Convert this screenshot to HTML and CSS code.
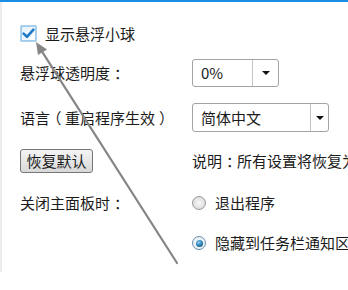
FILE: index.html
```html
<!DOCTYPE html>
<html lang="zh-CN">
<head>
<meta charset="utf-8">
<link rel="stylesheet" href="styles.css">
</head>
<body>
<div class="topbar"></div>
<div class="panel">
  <div class="row row-check">
    <label class="check">
      <svg class="checkbox" width="17" height="17" viewBox="0 0 17 17">
        <defs>
          <linearGradient id="cbg" x1="0" y1="0" x2="1" y2="1">
            <stop offset="0" stop-color="#e4f1fb"/>
            <stop offset="1" stop-color="#ffffff"/>
          </linearGradient>
        </defs>
        <rect x="0.5" y="0.5" width="16" height="16" fill="#5aa6dd"/>
        <rect x="1.5" y="1.5" width="14" height="14" fill="url(#cbg)" stroke="#9fcbec" stroke-width="1"/>
        <path d="M3.6 8.6 L7 11.8 L13.4 4.6" fill="none" stroke="#1d78c8" stroke-width="2.6" stroke-linecap="round" stroke-linejoin="round"/>
      </svg>
      <span>显示悬浮小球</span>
    </label>
  </div>

  <div class="row row-opacity">
    <div class="label">悬浮球透明度<span class="punct">：</span></div>
    <div class="select sel-small">
      <span class="sel-text">0%</span>
      <span class="sel-btn"><span class="tri"></span></span>
    </div>
  </div>

  <div class="row row-lang">
    <div class="label">语言<span class="punct">（</span>重启程序生效<span class="punct">）</span></div>
    <div class="select sel-big">
      <span class="sel-text">简体中文</span>
      <span class="sel-btn"><span class="tri"></span></span>
    </div>
  </div>

  <div class="row row-reset">
    <div class="label"><button class="btn">恢复默认</button></div>
    <div class="note">说明<span class="punct">：</span>所有设置将恢复为默认值</div>
  </div>

  <div class="row row-close">
    <div class="label">关闭主面板时<span class="punct">：</span></div>
    <div class="radio-item"><span class="radio"></span><span>退出程序</span></div>
  </div>

  <div class="row row-hide">
    <div class="label"></div>
    <div class="radio-item"><span class="radio on"><span class="dot"></span></span><span>隐藏到任务栏通知区域</span></div>
  </div>
</div>

<svg class="pointer" width="348" height="290" viewBox="0 0 348 290">
  <line x1="42.4" y1="52.1" x2="177" y2="263" stroke="#858585" stroke-width="2.2" stroke-linecap="round"/>
  <polygon points="36,42 47,49.6 38,55" fill="#858585"/>
</svg>
</body>
</html>
```
FILE: styles.css
```css
html, body {
  margin: 0;
  padding: 0;
  background: #ffffff;
  width: 348px;
  height: 290px;
  overflow: hidden;
}

body {
  position: relative;
  font-family: "Noto Sans CJK SC", "Noto Sans", sans-serif;
  font-size: 15px;
  color: #1b1b1b;
  text-spacing-trim: space-all;
}

.punct {
  font-feature-settings: "halt" 1;
  padding-left: 4px;
  padding-right: 3.5px;
}

.topbar {
  height: 2px;
  background: #1b8fe3;
}

.panel {
  border-left: 2px solid #ececec;
  height: 270px;
  box-sizing: border-box;
  padding-top: 23px;
  padding-left: 18px;
  display: flex;
  flex-direction: column;
}

.row {
  display: grid;
  grid-template-columns: 172px 1fr;
  align-items: center;
  white-space: nowrap;
}

.row-check { height: 17px; display: flex; }
.row-opacity { height: 28px; margin-top: 17px; }
.row-lang { height: 29px; margin-top: 16px; }
.row-reset { height: 24px; margin-top: 17px; }
.row-close { height: 16px; margin-top: 20px; }
.row-hide { height: 16px; margin-top: 24px; }

.label {
  line-height: 20px;
}

.check {
  display: flex;
  align-items: center;
  gap: 8px;
  line-height: 20px;
}

.checkbox {
  display: block;
  flex: none;
}

.select {
  box-sizing: border-box;
  height: 100%;
  border: 1px solid #a3a3a3;
  border-radius: 3px;
  background: #ffffff;
  display: flex;
  align-items: center;
}

.sel-small { width: 87px; }
.sel-big { width: 137px; }

.sel-text {
  flex: 1;
  padding-left: 8px;
  line-height: 20px;
}

.sel-btn {
  width: 25px;
  height: 100%;
  border-left: 1px solid #c4c4c4;
  display: flex;
  align-items: center;
  justify-content: center;
}

.sel-big .sel-btn {
  width: 17px;
}

.tri {
  width: 0;
  height: 0;
  border-left: 4px solid transparent;
  border-right: 4px solid transparent;
  border-top: 4px solid #111111;
}

.btn {
  box-sizing: border-box;
  width: 73px;
  height: 24px;
  padding: 0;
  border: 1px solid #767676;
  border-radius: 3px;
  background: linear-gradient(#f4f4f4, #e6e6e6 50%, #d8d8d8);
  font-family: inherit;
  font-size: 15px;
  color: #1b1b1b;
  line-height: 20px;
  display: block;
}

.note {
  line-height: 20px;
}

.radio-item {
  display: flex;
  align-items: center;
  gap: 9px;
  line-height: 20px;
}

.radio {
  box-sizing: border-box;
  width: 14px;
  height: 14px;
  border-radius: 50%;
  border: 1px solid #9a9a9a;
  background: radial-gradient(circle at 50% 50%, #f8f8f8 0, #e2e2e2 60%, #cfcfcf 100%);
  display: flex;
  align-items: center;
  justify-content: center;
  flex: none;
}

.radio.on {
  border-color: #6c8fae;
  background: radial-gradient(circle at 50% 50%, #ffffff 0, #e6eef5 70%, #c8d6e3 100%);
}

.dot {
  width: 7px;
  height: 7px;
  border-radius: 50%;
  background: radial-gradient(circle at 40% 35%, #8fd0f2 0, #2b7fb3 50%, #0f3f66 100%);
}

.pointer {
  position: absolute;
  left: 0;
  top: 0;
  pointer-events: none;
}
```
